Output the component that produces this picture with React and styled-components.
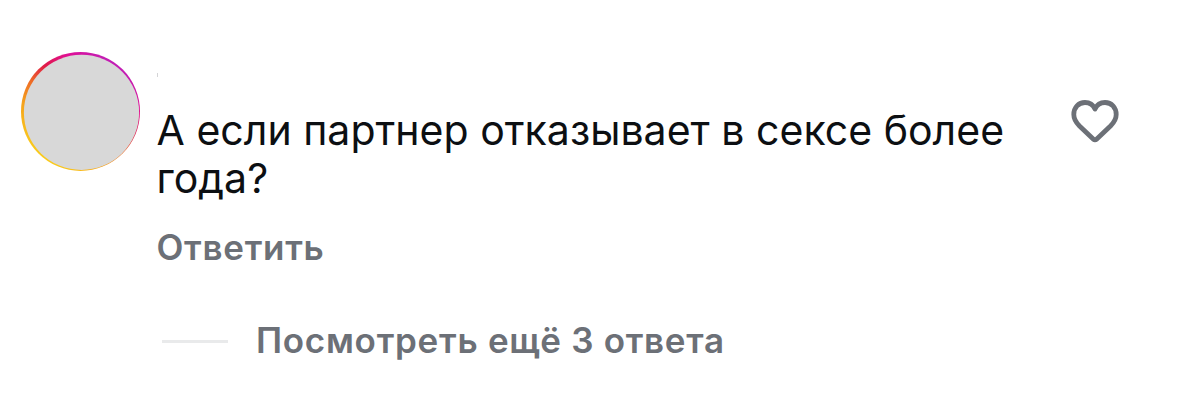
import React from 'react';
import styled, { createGlobalStyle } from 'styled-components';

const Global = createGlobalStyle`
  body { margin: 0; background: #fff; }
  * { box-sizing: border-box; }
`;
const Comment = styled.article`
  display: flex;
  align-items: flex-start;
  width: 1179px;
  height: 405px;
  padding: 51px 59px 0 20px;
  background: #fff;
  font-family: Inter, "Liberation Sans", sans-serif;
`;
const Avatar = styled.div`
  flex: none;
  width: 120px;
  height: 120px;
  svg { display: block; }
`;
const Body = styled.div`
  flex: 1;
  padding: 22px 0 0 16.5px;
`;
const NameMark = styled.div`
  width: 1px;
  height: 4px;
  margin: 0 0 29px 0.5px;
  background: #d4d4d6;
`;
const Message = styled.p`
  margin: 0;
  width: 870px;
  color: #0c0f12;
  font-size: 41px;
  line-height: 48px;
  letter-spacing: 0.03px;
`;
const TextButton = styled.button`
  display: block;
  padding: 0;
  border: 0;
  background: none;
  color: #6c7077;
  font-family: inherit;
  font-weight: 600;
  font-size: 35px;
  line-height: 44px;
  letter-spacing: 0.72px;
  white-space: nowrap;
`;
const Reply = styled(TextButton)`
  margin-top: 23px;
`;
const Thread = styled.div`
  display: flex;
  align-items: center;
  gap: 28px;
  margin: 49px 0 0 5.5px;
`;
const Rule = styled.span`
  width: 66px;
  height: 3px;
  margin-top: 2px;
  background: #e9eaeb;
`;
const Like = styled.button`
  flex: none;
  margin-top: 48px;
  padding: 0;
  border: 0;
  background: none;
  svg { display: block; }
`;

export default function App() {
  return (
    <>
      <Global />
      <Comment>
        <Avatar>
          <svg width="120" height="120" viewBox="0 0 120 120">
            <defs>
              <linearGradient id="ring" x1="0.1" y1="0.9" x2="0.75" y2="0.05">
                <stop offset="0" stopColor="#fbd51c" />
                <stop offset="0.3" stopColor="#f5a21c" />
                <stop offset="0.48" stopColor="#ee6a26" />
                <stop offset="0.64" stopColor="#e01a48" />
                <stop offset="0.82" stopColor="#e00f94" />
                <stop offset="1" stopColor="#bf1fb8" />
              </linearGradient>
            </defs>
            <circle cx="60.5" cy="60.4" r="59.5" fill="url(#ring)" />
            <circle cx="61.5" cy="61.4" r="57.6" fill="#d8d8d8" />
          </svg>
        </Avatar>
        <Body>
          <NameMark />
          <Message>А если партнер отказывает в сексе более года?</Message>
          <Reply>Ответить</Reply>
          <Thread>
            <Rule />
            <TextButton>Посмотреть ещё 3 ответа</TextButton>
          </Thread>
        </Body>
        <Like aria-label="Нравится">
          <svg width="49" height="44" viewBox="0.5 -0.5 49 44" fill="none" stroke="#6c7077" strokeWidth="4.8" strokeLinejoin="round">
            <path d="M24.500 9.500C22.500 5 18.500 3 14.500 3C8 3 3.300 8 3.300 15C3.300 19.500 5.500 23 9 26.500L22.700 39.600Q24.500 41 26.300 39.600L40 26.500C43.500 23 45.700 19.500 45.700 15C45.700 8 41 3 34.500 3C30.500 3 26.500 5 24.500 9.500Z" />
          </svg>
        </Like>
      </Comment>
    </>
  );
}
